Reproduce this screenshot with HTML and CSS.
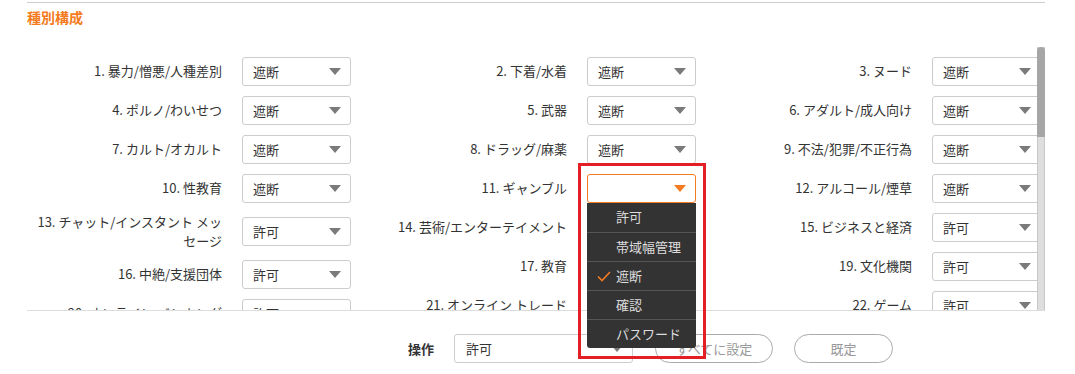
FILE: index.html
```html
<!DOCTYPE html>
<html lang="ja">
<head>
  <meta charset="UTF-8" />
  <meta name="viewport" content="width=device-width, initial-scale=1" />
  <title>種別構成</title>
  <link rel="stylesheet" href="styles.css">
</head>
<body>

<div class="panel">
  <div class="panel-title">種別構成</div>

  <div class="scroll">
    <div class="columns">
      <div class="col">
        <div class="row"><div class="label">1. 暴力/憎悪/人種差別</div><div class="select"><span>遮断</span><i class="arrow"></i></div></div>
        <div class="row"><div class="label">4. ポルノ/わいせつ</div><div class="select"><span>遮断</span><i class="arrow"></i></div></div>
        <div class="row"><div class="label">7. カルト/オカルト</div><div class="select"><span>遮断</span><i class="arrow"></i></div></div>
        <div class="row"><div class="label">10. 性教育</div><div class="select"><span>遮断</span><i class="arrow"></i></div></div>
        <div class="row"><div class="label">13. チャット/インスタント メッセージ</div><div class="select"><span>許可</span><i class="arrow"></i></div></div>
        <div class="row"><div class="label">16. 中絶/支援団体</div><div class="select"><span>許可</span><i class="arrow"></i></div></div>
        <div class="row"><div class="label">20. オンライン バンキング</div><div class="select"><span>許可</span><i class="arrow"></i></div></div>
      </div>

      <div class="col">
        <div class="row"><div class="label">2. 下着/水着</div><div class="select"><span>遮断</span><i class="arrow"></i></div></div>
        <div class="row"><div class="label">5. 武器</div><div class="select"><span>遮断</span><i class="arrow"></i></div></div>
        <div class="row"><div class="label">8. ドラッグ/麻薬</div><div class="select"><span>遮断</span><i class="arrow"></i></div></div>
        <div class="row"><div class="label">11. ギャンブル</div><div class="select open"><span></span><i class="arrow"></i></div></div>
        <div class="row"><div class="label">14. 芸術/エンターテイメント</div><div class="select"><span>許可</span><i class="arrow"></i></div></div>
        <div class="row"><div class="label">17. 教育</div><div class="select"><span>許可</span><i class="arrow"></i></div></div>
        <div class="row"><div class="label">21. オンライン トレード</div><div class="select"><span>許可</span><i class="arrow"></i></div></div>
      </div>

      <div class="col">
        <div class="row"><div class="label">3. ヌード</div><div class="select"><span>遮断</span><i class="arrow"></i></div></div>
        <div class="row"><div class="label">6. アダルト/成人向け</div><div class="select"><span>遮断</span><i class="arrow"></i></div></div>
        <div class="row"><div class="label">9. 不法/犯罪/不正行為</div><div class="select"><span>遮断</span><i class="arrow"></i></div></div>
        <div class="row"><div class="label">12. アルコール/煙草</div><div class="select"><span>遮断</span><i class="arrow"></i></div></div>
        <div class="row"><div class="label">15. ビジネスと経済</div><div class="select"><span>許可</span><i class="arrow"></i></div></div>
        <div class="row"><div class="label">19. 文化機関</div><div class="select"><span>許可</span><i class="arrow"></i></div></div>
        <div class="row"><div class="label">22. ゲーム</div><div class="select"><span>許可</span><i class="arrow"></i></div></div>
      </div>
    </div>

    <div class="scrollbar"><div class="scroll-thumb"></div></div>
  </div>

  <div class="actions">
    <span class="actions-label">操作</span>
    <div class="select wide"><span>許可</span><i class="arrow"></i></div>
    <button class="btn btn-all">すべてに設定</button>
    <button class="btn btn-default">既定</button>
  </div>

  <!-- open dropdown for 11. ギャンブル -->
  <div class="highlight"></div>
  <ul class="menu">
    <li>許可</li>
    <li>帯域幅管理</li>
    <li class="checked">
      <svg class="check" width="14" height="11" viewBox="0 0 14 11"><polyline points="1,5.5 5,9.5 13,1" fill="none" stroke="#f47b20" stroke-width="1.6"/></svg>
      遮断
    </li>
    <li>確認</li>
    <li>パスワード</li>
  </ul>
</div>

</body>
</html>
```

FILE: styles.css
```css
:root {
  --text: #333;
  --orange: #f47b20;
  --border: #ccc;
  --line: #ddd;
  --menu-bg: #333;
}

body {
  margin: 0;
  font-family: "Noto Sans CJK JP", sans-serif;
  font-size: 13px;
  color: var(--text);
  background: #fff;
  width: 1075px;
  height: 374px;
  overflow: hidden;
}

.panel {
  position: relative;
  margin: 2px 30px 0 27px;
  border-top: 1px solid var(--border);
}

.panel-title {
  color: var(--orange);
  font-size: 14px;
  font-weight: bold;
  line-height: 20px;
  padding-top: 4px;
}

.scroll {
  position: relative;
  height: 263px;
  margin-top: 20px;
  overflow: hidden;
}

.columns {
  display: flex;
  padding-top: 5px;
}

.col {
  flex: none;
  width: 345px;
}

.row {
  display: flex;
  align-items: center;
  padding: 5px 0;
}

.label {
  flex: none;
  width: 215px;
  box-sizing: border-box;
  padding-right: 20px;
  text-align: right;
  line-height: 18.5px;
}

.select {
  flex: none;
  display: flex;
  align-items: center;
  justify-content: space-between;
  width: 109px;
  height: 29px;
  box-sizing: border-box;
  padding: 0 9px 0 10px;
  border: 1px solid var(--border);
  border-radius: 3px;
  background: #fff;
}

.arrow {
  width: 0;
  height: 0;
  border-left: 6px solid transparent;
  border-right: 6px solid transparent;
  border-top: 7px solid #7a7a7a;
}

.select.open {
  border-color: var(--orange);
}

.select.open .arrow {
  border-top-color: var(--orange);
}

.scrollbar {
  position: absolute;
  top: 0;
  right: 0;
  bottom: 0;
  width: 8px;
  box-sizing: border-box;
  background: #dedede;
  border-left: 1px solid #c8c8c8;
  border-right: 1px solid #c8c8c8;
}

.scroll-thumb {
  height: 90px;
  margin: 0 -1px;
  background: #a6a6a6;
  border-radius: 4px 4px 0 0;
}

.actions {
  display: flex;
  align-items: center;
  border-top: 1px solid var(--line);
  padding: 23px 0 0 381px;
}

.actions-label {
  font-weight: bold;
  margin-right: 20px;
}

.select.wide {
  width: 179px;
  padding-left: 11px;
}

.btn {
  height: 29px;
  box-sizing: border-box;
  border: 1px solid #aaa;
  border-radius: 15px;
  background: #fff;
  color: #999;
  font-family: inherit;
  font-size: 13px;
  padding: 0;
}

.btn-all {
  width: 118px;
  margin-left: 22px;
}

.btn-default {
  width: 99px;
  margin-left: 21px;
}

.highlight {
  position: absolute;
  left: 551px;
  top: 160px;
  width: 128px;
  height: 196px;
  box-sizing: border-box;
  border: 3px solid #e31e24;
}

.menu {
  position: absolute;
  left: 560px;
  top: 200px;
  width: 109px;
  margin: 0;
  padding: 0;
  list-style: none;
  background: var(--menu-bg);
  border-radius: 0 0 3px 3px;
  color: #ddd;
}

.menu li {
  position: relative;
  height: 29px;
  box-sizing: border-box;
  line-height: 28px;
  padding-left: 29px;
}

.menu li + li {
  border-top: 1px solid #555;
}

.check {
  position: absolute;
  left: 10px;
  top: 9px;
}
```
